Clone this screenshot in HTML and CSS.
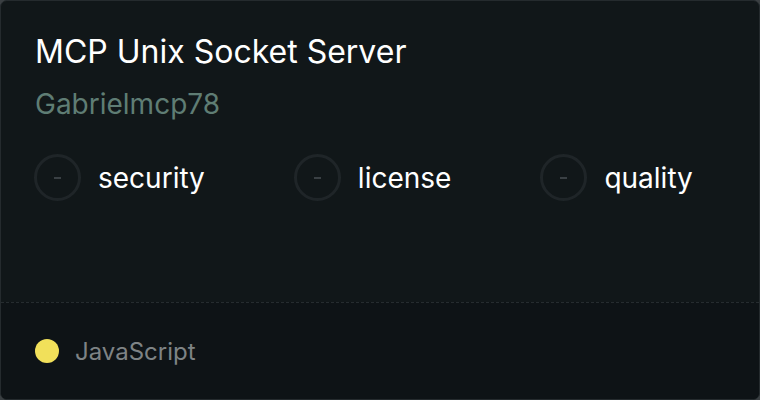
FILE: index.html
```html
<!DOCTYPE html>
<html>
<head>
<meta charset="utf-8">
<link rel="stylesheet" href="styles.css">
</head>
<body>
<div class="card">
  <div class="main">
    <h1 class="title">MCP Unix Socket Server</h1>
    <div class="owner">Gabrielmcp78</div>
    <div class="metrics">
      <div class="metric"><span class="ring"><span class="dash"></span></span><span class="label">security</span></div>
      <div class="metric"><span class="ring"><span class="dash"></span></span><span class="label">license</span></div>
      <div class="metric"><span class="ring"><span class="dash"></span></span><span class="label">quality</span></div>
    </div>
  </div>
  <div class="footer">
    <span class="lang-dot"></span>
    <span class="lang">JavaScript</span>
  </div>
</div>
</body>
</html>
```
FILE: styles.css
```css
html, body {
  margin: 0;
  padding: 0;
  background: #3a3f42;
}
body {
  width: 760px;
  height: 400px;
  font-family: Inter, "Noto Sans", sans-serif;
}
.card {
  box-sizing: border-box;
  width: 760px;
  height: 400px;
  background: #111719;
  border: 1px solid #252b2e;
  border-radius: 7px;
  overflow: hidden;
  display: flex;
  flex-direction: column;
}
.main {
  flex: 1;
  padding: 31px 34px 0 34px;
}
.title {
  margin: 0;
  font-size: 32px;
  font-weight: 400;
  line-height: 40px;
  color: #ffffff;
}
.owner {
  margin-top: 14px;
  font-size: 28px;
  line-height: 36px;
  color: #5f7d74;
}
.metrics {
  display: flex;
  gap: 89px;
  margin-top: 32px;
  margin-left: -1px;
}
.metric {
  display: flex;
  align-items: center;
  gap: 17px;
}
.ring {
  box-sizing: border-box;
  width: 47px;
  height: 47px;
  border: 3px solid #1f2528;
  border-radius: 50%;
  display: flex;
  align-items: center;
  justify-content: center;
}
.dash {
  width: 7px;
  height: 2px;
  background: #3a4044;
}
.label {
  font-size: 28px;
  color: #ffffff;
}
.footer {
  height: 96px;
  border-top: 1px dashed #262c2f;
  background: #0e1316;
  display: flex;
  align-items: center;
  padding-left: 34px;
  gap: 16px;
}
.lang-dot {
  width: 24px;
  height: 24px;
  border-radius: 50%;
  background: #f1e05a;
}
.lang {
  font-size: 24px;
  color: #7e8385;
}
```
